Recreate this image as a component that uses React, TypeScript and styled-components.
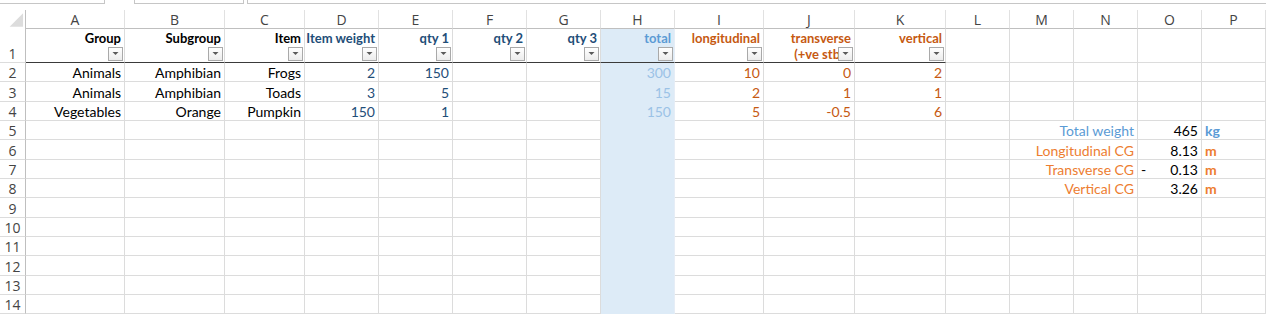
import React from 'react';
import styled, { createGlobalStyle } from 'styled-components';

const Global = createGlobalStyle`
  html, body { margin: 0; padding: 0; background: #fff; }
  body { width: 1266px; height: 315px; overflow: hidden; font-family: Lato, "Open Sans", sans-serif; }
`;

const COLS = [26, 99, 100, 80, 74, 74, 74, 74, 74, 89, 91, 91, 64, 64, 64, 64, 64];
const LETTERS = 'ABCDEFGHIJKLMNOP'.split('');

const C = {
  black: '#000000',
  navy: '#1f4e78',
  blue: '#5b9bd5',
  pale: '#9bc2e6',
  rust: '#c65911',
  orange: '#ed7d31',
  grid: '#dcdcdc',
  fill: '#ddebf7',
};

const Page = styled.div`
  width: 1266px;
  height: 315px;
  overflow: hidden;
  background: #fff;
  display: flex;
  flex-direction: column;
`;

const TopStrip = styled.div`
  height: 4px;
  display: flex;
  margin-bottom: 6px;
`;

const StripBox = styled.div<{ $w?: number; $gapLeft?: number; $grow?: boolean; $left?: boolean; $right?: boolean }>`
  box-sizing: border-box;
  height: 4px;
  width: ${p => (p.$w ? `${p.$w}px` : 'auto')};
  flex: ${p => (p.$grow ? '1' : 'none')};
  margin-left: ${p => p.$gapLeft ?? 0}px;
  border-bottom: 1px solid #c6c6c6;
  border-left: ${p => (p.$left ? '1px solid #c6c6c6' : 'none')};
  border-right: ${p => (p.$right ? '1px solid #c6c6c6' : 'none')};
`;

const Sheet = styled.div`
  display: grid;
  grid-template-columns: ${COLS.map(c => `${c}px`).join(' ')};
  grid-template-rows: 19px 34px repeat(13, 19.33px);
  width: 1266px;
`;

const Corner = styled.div`
  box-sizing: border-box;
  border-right: 1px solid #bfbfbf;
  display: flex;
  align-items: flex-start;
  justify-content: flex-start;
`;

const ColHead = styled.div`
  box-sizing: border-box;
  border-right: 1px solid #e1e1e1;
  border-bottom: 1px solid #bfbfbf;
  display: flex;
  align-items: center;
  justify-content: center;
  font-family: "Open Sans", "Noto Sans", sans-serif;
  font-size: 14px;
  line-height: 18px;
  padding-top: 1px;
  color: #444;
`;

const RowHead = styled.div`
  box-sizing: border-box;
  border-right: 1px solid #bfbfbf;
  border-bottom: 1px solid ${C.grid};
  display: flex;
  align-items: flex-end;
  justify-content: center;
  padding-bottom: 0;
  font-family: "Open Sans", "Noto Sans", sans-serif;
  font-size: 14px;
  line-height: 17px;
  color: #444;
`;

type Align = 'left' | 'right' | 'center';

const Cell = styled.div<{
  $fill?: boolean;
  $rule?: boolean;
  $align?: Align;
  $color?: string;
  $bold?: boolean;
  $top?: boolean;
  $span?: number;
}>`
  position: relative;
  box-sizing: border-box;
  overflow: hidden;
  grid-column: span ${p => p.$span ?? 1};
  display: flex;
  flex-direction: column;
  justify-content: ${p => (p.$top ? 'flex-start' : 'flex-end')};
  align-items: ${p => (p.$align === 'left' ? 'flex-start' : p.$align === 'center' ? 'center' : 'flex-end')};
  padding: ${p => (p.$top ? '1px 3px 0 3px' : '0 3px 0 3px')};
  border-right: 1px solid ${p => (p.$fill ? '#e6edf6' : C.grid)};
  border-bottom: 1px solid ${p => (p.$rule ? '#3a3a3a' : p.$fill ? C.fill : C.grid)};
  background: ${p => (p.$fill ? C.fill : '#fff')};
  color: ${p => p.$color ?? C.black};
  font-weight: ${p => (p.$bold ? 700 : 400)};
  font-size: ${p => (p.$bold && p.$top ? 13 : 14)}px;
  line-height: 16px;
  white-space: nowrap;
`;

const Line = styled.span`
  display: block;
`;

const Split = styled.span`
  align-self: stretch;
  display: flex;
  justify-content: space-between;
`;

const FilterButton = styled.span`
  position: absolute;
  right: 1px;
  bottom: 1px;
  width: 15px;
  height: 14px;
  box-sizing: border-box;
  border: 1px solid #a9a9a9;
  background: linear-gradient(#ffffff, #ececec);
  display: flex;
  align-items: center;
  justify-content: center;
`;

const Arrow = () => (
  <svg width="7" height="4" viewBox="0 0 7 4">
    <polygon points="0.5,0 6.5,0 3.5,3" fill="#5a5a5a" />
  </svg>
);

type Spec = {
  text?: string;
  lines?: string[];
  split?: [string, string];
  color?: string;
  bold?: boolean;
  align?: Align;
  filter?: boolean;
  span?: number;
};

const head = (text: string | string[], color: string): Spec => ({
  text: typeof text === 'string' ? text : undefined,
  lines: Array.isArray(text) ? text : undefined,
  color,
  bold: true,
  filter: true,
});

const DATA: Record<number, Record<string, Spec>> = {
  1: {
    A: head('Group', C.black),
    B: head('Subgroup', C.black),
    C: head('Item', C.black),
    D: head('Item weight', C.navy),
    E: head('qty 1', C.navy),
    F: head('qty 2', C.navy),
    G: head('qty 3', C.navy),
    H: head('total', C.blue),
    I: head('longitudinal', C.rust),
    J: head(['transverse', '(+ve stbd)'], C.rust),
    K: head('vertical', C.rust),
  },
  2: {
    A: { text: 'Animals' }, B: { text: 'Amphibian' }, C: { text: 'Frogs' },
    D: { text: '2', color: C.navy }, E: { text: '150', color: C.navy },
    H: { text: '300', color: C.pale },
    I: { text: '10', color: C.rust }, J: { text: '0', color: C.rust }, K: { text: '2', color: C.rust },
  },
  3: {
    A: { text: 'Animals' }, B: { text: 'Amphibian' }, C: { text: 'Toads' },
    D: { text: '3', color: C.navy }, E: { text: '5', color: C.navy },
    H: { text: '15', color: C.pale },
    I: { text: '2', color: C.rust }, J: { text: '1', color: C.rust }, K: { text: '1', color: C.rust },
  },
  4: {
    A: { text: 'Vegetables' }, B: { text: 'Orange' }, C: { text: 'Pumpkin' },
    D: { text: '150', color: C.navy }, E: { text: '1', color: C.navy },
    H: { text: '150', color: C.pale },
    I: { text: '5', color: C.rust }, J: { text: '-0.5', color: C.rust }, K: { text: '6', color: C.rust },
  },
  5: {
    M: { text: 'Total weight', color: C.blue, span: 2 },
    O: { text: '465' },
    P: { text: 'kg', color: C.blue, bold: true, align: 'left' },
  },
  6: {
    M: { text: 'Longitudinal CG', color: C.orange, span: 2 },
    O: { text: '8.13' },
    P: { text: 'm', color: C.orange, bold: true, align: 'left' },
  },
  7: {
    M: { text: 'Transverse CG', color: C.orange, span: 2 },
    O: { split: ['-', '0.13'] },
    P: { text: 'm', color: C.orange, bold: true, align: 'left' },
  },
  8: {
    M: { text: 'Vertical CG', color: C.orange, span: 2 },
    O: { text: '3.26' },
    P: { text: 'm', color: C.orange, bold: true, align: 'left' },
  },
};

const TABLE_COLS = 'ABCDEFGHIJK';

function renderRow(r: number) {
  const out: React.ReactNode[] = [<RowHead key={`rh${r}`}>{r}</RowHead>];
  const row = DATA[r] ?? {};
  for (let i = 0; i < LETTERS.length; i++) {
    const L = LETTERS[i];
    const s = row[L] ?? {};
    const isHeadRow = r === 1;
    out.push(
      <Cell
        key={`${L}${r}`}
        $fill={L === 'H'}
        $rule={isHeadRow && TABLE_COLS.includes(L)}
        $align={s.align ?? 'right'}
        $color={s.color}
        $bold={s.bold}
        $top={isHeadRow}
        $span={s.span}
      >
        {s.text && <Line>{s.text}</Line>}
        {s.lines && s.lines.map(l => <Line key={l}>{l}</Line>)}
        {s.split && (
          <Split>
            <span>{s.split[0]}</span>
            <span>{s.split[1]}</span>
          </Split>
        )}
        {s.filter && (
          <FilterButton>
            <Arrow />
          </FilterButton>
        )}
      </Cell>
    );
    if (s.span && s.span > 1) i += s.span - 1;
  }
  return out;
}

export default function App() {
  return (
    <Page>
      <Global />
      <TopStrip>
        <StripBox $w={105} $right />
        <StripBox $w={110} $gapLeft={29} $left $right />
        <StripBox $grow $gapLeft={3} $left />
      </TopStrip>
      <Sheet>
        <Corner>
          <svg width="26" height="19" viewBox="0 0 26 19">
            <polygon points="24,3 24,17 10,17" fill="#dcdcdc" />
          </svg>
        </Corner>
        {LETTERS.map(l => (
          <ColHead key={l}>{l}</ColHead>
        ))}
        {Array.from({ length: 14 }, (_, i) => renderRow(i + 1))}
      </Sheet>
    </Page>
  );
}
